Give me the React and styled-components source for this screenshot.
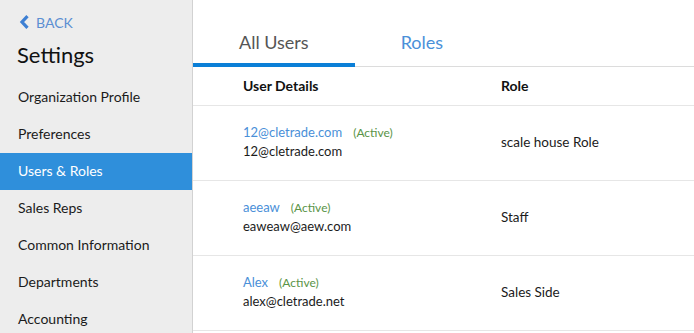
import React from 'react'
import styled, { createGlobalStyle } from 'styled-components'

const GlobalStyle = createGlobalStyle`
  html, body {
    margin: 0;
    padding: 0;
    background: #ffffff;
    font-family: Lato, "Open Sans", Arial, sans-serif;
    color: #1b1b1b;
  }
`

const Page = styled.div`
  display: flex;
  height: 100vh;
  overflow: hidden;
`

const Sidebar = styled.aside`
  width: 192px;
  flex-shrink: 0;
  background: #ededed;
  border-right: 1px solid #d2d2d2;
  display: flex;
  flex-direction: column;
`

const BackLink = styled.a`
  display: flex;
  align-items: center;
  gap: 6px;
  margin: 14px 0 0 19px;
  height: 16px;
  font-size: 14px;
  color: #5b8fd2;
  text-decoration: none;
  cursor: pointer;
`

const Title = styled.h1`
  margin: 0;
  padding: 8px 0 0 17px;
  height: 34px;
  line-height: 34px;
  font-size: 22px;
  font-weight: 400;
  color: #111;
`

const Nav = styled.nav`
  display: flex;
  flex-direction: column;
  margin-top: 7px;
`

const NavItem = styled.div`
  height: 37px;
  line-height: 36px;
  padding-left: 18px;
  font-size: 14px;
  color: ${p => (p.$active ? '#ffffff' : '#1b1b1b')};
  background: ${p => (p.$active ? '#2f8fdb' : 'transparent')};
  cursor: pointer;
`

const Main = styled.main`
  flex: 1;
  display: flex;
  flex-direction: column;
  min-width: 0;
`

const Tabs = styled.div`
  display: flex;
  height: 66px;
  border-bottom: 1px solid #dcdcdc;
`

const Tab = styled.div`
  padding: 21px 46px 0;
  display: flex;
  align-items: center;
  font-size: 18px;
  color: ${p => (p.$active ? '#555555' : '#4a90d9')};
  border-bottom: 4px solid ${p => (p.$active ? '#0b7fd7' : 'transparent')};
  margin-bottom: -1px;
  cursor: pointer;
`

const Row = styled.div`
  display: grid;
  grid-template-columns: 258px 1fr;
  align-items: center;
  padding-left: 50px;
  height: ${p => (p.$header ? '38px' : '74px')};
  border-bottom: 1px solid #e6e6e6;
`

const HeadCell = styled.div`
  font-size: 14px;
  font-weight: 700;
  color: #111;
  padding-bottom: 1px;
`

const UserCell = styled.div`
  display: flex;
  flex-direction: column;
  padding-bottom: 2px;
`

const NameLine = styled.div`
  display: flex;
  align-items: baseline;
  gap: 11px;
  line-height: 19px;
`

const Name = styled.a`
  font-size: 13px;
  color: #4a8fd8;
  text-decoration: none;
`

const Status = styled.span`
  font-size: 12px;
  color: #5a9447;
`

const Email = styled.div`
  font-size: 13px;
  line-height: 19px;
  color: #1b1b1b;
`

const RoleCell = styled.div`
  font-size: 13.5px;
  color: #1b1b1b;
  padding-bottom: 2px;
`

const Chevron = () => (
  <svg width="11" height="14" viewBox="0 0 11 14">
    <path d="M8.5 1.2 L3 7 L8.5 12.8" fill="none" stroke="#3d7fd3" strokeWidth="3.2" />
  </svg>
)

const navItems = [
  'Organization Profile',
  'Preferences',
  'Users & Roles',
  'Sales Reps',
  'Common Information',
  'Departments',
  'Accounting',
]

const users = [
  { name: '12@cletrade.com', email: '12@cletrade.com', role: 'scale house Role' },
  { name: 'aeeaw', email: 'eaweaw@aew.com', role: 'Staff' },
  { name: 'Alex', email: 'alex@cletrade.net', role: 'Sales Side' },
]

export default function App() {
  return (
    <Page>
      <GlobalStyle />
      <Sidebar>
        <BackLink>
          <Chevron />
          BACK
        </BackLink>
        <Title>Settings</Title>
        <Nav>
          {navItems.map(item => (
            <NavItem key={item} $active={item === 'Users & Roles'}>
              {item}
            </NavItem>
          ))}
        </Nav>
      </Sidebar>
      <Main>
        <Tabs>
          <Tab $active>All Users</Tab>
          <Tab>Roles</Tab>
        </Tabs>
        <Row $header>
          <HeadCell>User Details</HeadCell>
          <HeadCell>Role</HeadCell>
        </Row>
        {users.map(u => (
          <Row key={u.email}>
            <UserCell>
              <NameLine>
                <Name>{u.name}</Name>
                <Status>(Active)</Status>
              </NameLine>
              <Email>{u.email}</Email>
            </UserCell>
            <RoleCell>{u.role}</RoleCell>
          </Row>
        ))}
      </Main>
    </Page>
  )
}
